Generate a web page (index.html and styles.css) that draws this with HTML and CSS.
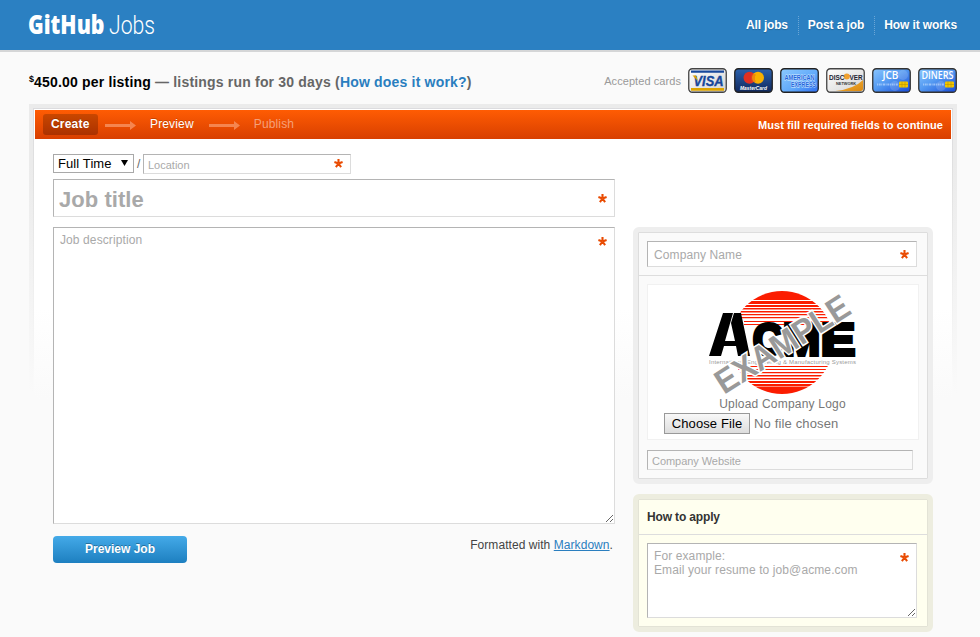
FILE: index.html
```html
<!DOCTYPE html>
<html lang="en">
<head>
<meta charset="utf-8">
<title>GitHub Jobs</title>
<link rel="stylesheet" href="styles.css">
</head>
<body>
<svg width="0" height="0" class="defs">
  <defs>
    <symbol id="star" viewBox="0 0 9 9"><path d="M4.5 4.5V.1M4.5 4.5L.4 3.1M4.5 4.5L8.600 3.1M4.5 4.5L1.900 8.200M4.5 4.5L7.100 8.200" stroke="#e94b02" stroke-width="2.1" fill="none"/></symbol>
    <symbol id="arrow" viewBox="0 0 31 9"><path d="M0 3h25V0l6 4.5-6 4.5V6H0z" fill="#f5854f"/></symbol>
    <linearGradient id="cardBlue" x1="0" y1="0" x2="1" y2="1"><stop offset="0" stop-color="#8ac6ff"/><stop offset=".45" stop-color="#559bf2"/><stop offset="1" stop-color="#1549d8"/></linearGradient>
    <linearGradient id="cardSky" x1="0" y1="0" x2="1" y2="1"><stop offset="0" stop-color="#8ccaff"/><stop offset=".6" stop-color="#5fa8fa"/><stop offset="1" stop-color="#2c6cf0"/></linearGradient>
    <linearGradient id="cardNavy" x1="0" y1="0" x2="0" y2="1"><stop offset="0" stop-color="#2b62ae"/><stop offset="1" stop-color="#10285c"/></linearGradient>
    <linearGradient id="cardGray" x1="0" y1="0" x2="1" y2="1"><stop offset="0" stop-color="#fff"/><stop offset="1" stop-color="#d2d2d2"/></linearGradient>
    <linearGradient id="gold" x1="0" y1="0" x2="1" y2="1"><stop offset="0" stop-color="#f4b43c"/><stop offset="1" stop-color="#dc8a12"/></linearGradient>
    <g id="chip"><rect x="27" y="13.500" width="9" height="6" rx="1" fill="#f2c500"/><path d="M30 13.500v6M33 13.500v6M27 16.500h9" stroke="#b89500" stroke-width=".6"/></g>
  </defs>
</svg>

<header class="header">
  <svg class="logo" width="130" height="36" viewBox="0 0 130 36">
    <text class="logo-bold" x="-1" y="27" textLength="76.500" lengthAdjust="spacingAndGlyphs">GitHub</text>
    <text class="logo-light" x="80" y="27" textLength="46" lengthAdjust="spacingAndGlyphs">Jobs</text>
  </svg>
  <nav class="nav"><a>All jobs</a><a>Post a job</a><a>How it works</a></nav>
</header>

<section class="pricing">
  <h2 class="price"><sup>$</sup><b>450.00 per listing</b> — listings run for 30 days (<a>How does it work?</a>)</h2>
  <div class="cards">
    <span>Accepted cards</span>
    <svg viewBox="0 0 39 25"><rect x=".75" y=".75" width="37.500" height="23.500" rx="3.500" fill="url(#cardGray)" stroke="#444" stroke-width="1.300"/><path d="M3 2.500h33v2.200H3z" fill="#17479b"/><path d="M3 20h33v2.800H3z" fill="#dda400"/><text x="5.500" y="18" class="visa" textLength="30" lengthAdjust="spacingAndGlyphs">VISA</text><path d="M4.500 7.500h3.500l2 5.500z" fill="#dda400"/></svg>
    <svg viewBox="0 0 39 25"><rect x=".75" y=".75" width="37.500" height="23.500" rx="3.500" fill="url(#cardNavy)" stroke="#222" stroke-width="1.300"/><circle cx="15.500" cy="9.800" r="6" fill="#e03022"/><circle cx="24" cy="9.800" r="6" fill="#f9b000"/><path d="M17.500 7h4M17 9h4M17 11h4M17.500 13h4" stroke="#e55719" stroke-width=".9"/><text x="6" y="21.500" class="mc" textLength="27" lengthAdjust="spacingAndGlyphs">MasterCard</text></svg>
    <svg viewBox="0 0 39 25"><rect x=".75" y=".75" width="37.500" height="23.500" rx="3.500" fill="url(#cardSky)" stroke="#222" stroke-width="1.300"/><text x="4.500" y="11.500" class="amex" textLength="30" lengthAdjust="spacingAndGlyphs">AMERICAN</text><text x="11" y="19" class="amex" textLength="25" lengthAdjust="spacingAndGlyphs">EXPRESS</text></svg>
    <svg viewBox="0 0 39 25"><rect x=".75" y=".75" width="37.500" height="23.500" rx="3.500" fill="url(#cardGray)" stroke="#444" stroke-width="1.300"/><path d="M9.500 23Q28 21 37 12v8.500q0 2.500-2.500 2.500z" fill="url(#gold)"/><circle cx="20.800" cy="8.500" r="3" fill="#f0a030"/><text x="3" y="11.500" class="disc" textLength="15.500" lengthAdjust="spacingAndGlyphs">DISC</text><text x="23.500" y="11.500" class="disc" textLength="13" lengthAdjust="spacingAndGlyphs">VER</text><text x="10" y="17.200" class="net" textLength="20" lengthAdjust="spacingAndGlyphs">NETWORK</text></svg>
    <svg viewBox="0 0 39 25"><rect x=".75" y=".75" width="37.500" height="23.500" rx="3.500" fill="url(#cardBlue)" stroke="#333" stroke-width="1.300"/><g fill="#fff" opacity=".15"><circle cx="31" cy="7" r="5"/><circle cx="23" cy="18" r="5"/></g><text x="10.500" y="11" class="jcb" textLength="16" lengthAdjust="spacingAndGlyphs">JCB</text><path d="M5 16.500h21" stroke="#b8d7ff" stroke-width="2" stroke-dasharray="1 .7 2 .6" opacity=".7"/><use href="#chip"/></svg>
    <svg viewBox="0 0 39 25"><rect x=".75" y=".75" width="37.500" height="23.500" rx="3.500" fill="url(#cardBlue)" stroke="#333" stroke-width="1.300"/><g fill="#fff" opacity=".15"><circle cx="31" cy="7" r="5"/><circle cx="23" cy="18" r="5"/></g><text x="3.500" y="11" class="jcb" textLength="32" lengthAdjust="spacingAndGlyphs">DINERS</text><path d="M5 16.500h21" stroke="#b8d7ff" stroke-width="2" stroke-dasharray="1 .7 2 .6" opacity=".7"/><use href="#chip"/></svg>
  </div>
</section>

<main class="frame">
 <div class="line">
 <div class="inner">
  <div class="steps">
    <span class="step current">Create</span>
    <svg class="arrow"><use href="#arrow"/></svg>
    <span class="step">Preview</span>
    <svg class="arrow"><use href="#arrow"/></svg>
    <span class="step off">Publish</span>
    <span class="notice">Must fill required fields to continue</span>
  </div>
  <div class="columns">
    <form class="main">
      <div class="row">
        <div class="select"><span>Full Time</span><svg width="7" height="6"><path d="M0 0h7L3.500 6z"/></svg></div>
        <span class="slash">/</span>
        <div class="field location"><input placeholder="Location"><svg class="star"><use href="#star"/></svg></div>
      </div>
      <div class="field title"><input placeholder="Job title"><svg class="star"><use href="#star"/></svg></div>
      <div class="field description"><textarea placeholder="Job description"></textarea><svg class="star"><use href="#star"/></svg></div>
      <div class="actions">
        <button type="button" class="submit">Preview Job</button>
        <p>Formatted with <a>Markdown</a>.</p>
      </div>
    </form>
    <aside class="side">
      <section class="box">
        <div class="box-head"><div class="field company"><input placeholder="Company Name"><svg class="star"><use href="#star"/></svg></div></div>
        <div class="box-body">
          <div class="upload">
            <svg class="acme" width="167" height="112" viewBox="0 0 167 112">
              <clipPath id="disc"><circle cx="82" cy="57.500" r="51.500"/></clipPath>
              <g clip-path="url(#disc)" fill="#fb1c00">
                <path d="M20 5h124v10H20zM20 16h124v3H20zM20 20h124v2H20zM20 23h124v1.500H20zM20 26h124v1.500H20zM20 29h124v1.200H20zM20 32h124v1.200H20zM44 36h100v1H44zM44 39h100v1H44z"/>
                <path d="M20 81h124v1H20zM20 84h124v1H20zM20 87h124v1.200H20zM20 90h124v1.400H20zM20 93h124v1.500H20zM20 96h124v2H20zM20 99h124v2.500H20zM20 102h124v8H20z"/>
              </g>
              <g class="acme-word">
                <path d="M23 28h10l-4 14-4 14h8v5h-9l-3 10H9z"/>
                <path d="M34 28h7l9 43H38l-2-10h-4v-5h3l-4-18z"/>
                <text x="53" y="70" font-size="45" textLength="30" lengthAdjust="spacingAndGlyphs">C</text>
                <text x="83" y="70" font-size="45" textLength="37" lengthAdjust="spacingAndGlyphs">M</text>
                <text x="121" y="70" font-size="45" textLength="34" lengthAdjust="spacingAndGlyphs">E</text>
              </g>
              <text class="acme-small" x="9" y="79" textLength="147" lengthAdjust="spacing">International Engineering &amp; Manufacturing Systems</text>
              <text class="example" x="-77" y="12" transform="translate(82.500 58.500) rotate(-32.500)" textLength="153" lengthAdjust="spacingAndGlyphs">EXAMPLE</text>
            </svg>
            <p>Upload Company Logo</p>
            <div class="file"><button type="button">Choose File</button><span>No file chosen</span></div>
          </div>
          <div class="field website"><input placeholder="Company Website"></div>
        </div>
      </section>
      <section class="box apply">
        <h3>How to apply</h3>
        <div class="field how"><textarea placeholder="For example:&#10;Email your resume to job@acme.com"></textarea><svg class="star"><use href="#star"/></svg></div>
      </section>
    </aside>
  </div>
 </div>
 </div>
</main>
</body>
</html>
```
FILE: styles.css
```css
* { box-sizing: border-box; }
body { margin: 0; height: 637px; overflow: hidden; background: #fafafa; color: #444; font: 12px/14px "Liberation Sans", Arial, sans-serif; }
p, h2, h3 { margin: 0; }
a { color: #2a7ebf; }
.defs { position: absolute; }

.header { display: flex; align-items: center; justify-content: space-between; height: 52px; padding: 0 23px 0 29px; background: #2b80c2; border-bottom: 2px solid #d5d6d7; }
.logo { display: block; fill: #fff; overflow: visible; }
.logo-bold { font: 800 26px "Open Sans", sans-serif; }
.logo-light { font: 300 26px Roboto, Lato, sans-serif; }
.nav { display: flex; line-height: 19px; font-weight: bold; letter-spacing: -.1px; }
.nav a { color: #fff; text-shadow: 0 1px 1px rgba(0, 0, 0, .2); }
.nav a + a { margin-left: 10px; padding-left: 9px; border-left: 1px dotted #6ba6d6; }
.nav a:first-child { letter-spacing: -.2px; }

.pricing { display: flex; justify-content: space-between; height: 52px; padding: 16px 23px 0 29px; }
.price { font-size: 14px; line-height: 28px; color: #666; letter-spacing: .185px; white-space: nowrap; }
.price b { color: #000; }
.price sup { font-size: 9px; line-height: 1px; color: #000; letter-spacing: 0; vertical-align: 5px; }
.cards { display: flex; gap: 7px; color: #999; font-size: 11px; line-height: 27px; letter-spacing: .07px; }
.cards svg { display: block; width: 39px; height: 25px; letter-spacing: 0; overflow: visible; }
.cards text { font-family: "Liberation Sans", sans-serif; font-weight: bold; }
.visa { font-size: 15px; font-style: italic; fill: #17479b; stroke: #17479b; stroke-width: .4px; }
.mc { font-size: 6px; font-style: italic; fill: #fff; }
.amex { font-size: 6.5px; fill: #1f66dc; stroke: #d5eaff; stroke-width: .8px; paint-order: stroke; }
.disc { font-size: 8px; fill: #223; }
.net { font-size: 4px; fill: #333; }
.cards .jcb { font: 600 10px "Open Sans", sans-serif; fill: #fff; }

.frame { margin: 0 23px 0 29px; padding: 4px 4px 0; height: 533px; background: linear-gradient(#ebebeb 0, #ebebeb 60px, #fafafa 290px); }
.line { padding: 1px 1px 0; height: 529px; background: linear-gradient(#dcdcdf 0, #e0e0e0 60px, #fafafa 270px); }
.inner { padding: 1px 1px 0; height: 528px; background: linear-gradient(#fff 0, #fff 200px, #fafafa 290px); }
.steps { display: flex; align-items: center; height: 29px; padding: 0 8px; background: linear-gradient(#ff5c03, #d83f00); }
.step { padding-bottom: 1px; color: #fff; text-shadow: 0 -1px 0 rgba(0, 0, 0, .2); letter-spacing: .15px; }
.step.current { width: 55px; padding: 3px 0 4px 8px; border-radius: 3px; background: linear-gradient(#c94700, #ab3100); font-weight: bold; letter-spacing: .2px; }
.step.off { color: #f5a07a; text-shadow: none; letter-spacing: .15px; }
.arrow { width: 31px; height: 9px; margin: 1px 14px 0 15px; }
.current + .arrow { margin-left: 7px; }
.notice { margin-left: auto; color: #fff; font-size: 11px; font-weight: bold; letter-spacing: .06px; }

.columns { display: flex; gap: 18px; padding: 15px 18px 0; }
.main { width: 562px; }
.row { display: flex; height: 20px; margin-bottom: 5px; }
.select { display: flex; align-items: center; justify-content: space-between; width: 81px; height: 19px; padding: 0 5px 0 4px; background: #fff; border: 1px solid #a9a9a9; color: #000; font-size: 13px; letter-spacing: .1px; }
.select svg { margin-bottom: 1px; }
.slash { width: 9px; padding: 3px 0 0 3px; color: #666; }
.field { position: relative; background: #fff; border: 1px solid; border-color: #b4b4b4 #dcdcdc #dcdcdc #b4b4b4; }
.field input, .field textarea { display: block; width: 100%; height: 100%; margin: 0; border: 0; outline: 0; background: none; font: 12px/14px "Liberation Sans", Arial, sans-serif; letter-spacing: .1px; }
::placeholder { color: #a9a9a9; opacity: 1; }
.star { position: absolute; width: 9px; height: 9px; right: 7px; top: 9px; }
.location { width: 208px; }
.location input { padding: 2px 4px 0; font-size: 11px; letter-spacing: 0; }
.location .star { top: 4px; }
.title { height: 38px; margin-bottom: 10px; }
.title input { padding: 3px 5px 0; font-size: 22px; font-weight: bold; letter-spacing: .05px; }
.title .star { top: 14px; }
.description { height: 297px; }
.description textarea { padding: 5px 6px; resize: both; }
.actions { display: flex; justify-content: space-between; padding: 12px 2px 0 0; }
.submit { width: 134px; height: 27px; padding: 0 0 2px; border: 0; border-radius: 4px; background: linear-gradient(#44aae8, #1d7fc0); color: #fff; font: bold 12px "Liberation Sans", Arial, sans-serif; text-shadow: 0 -1px 0 rgba(0, 0, 0, .3); }
.actions p { padding-top: 2px; letter-spacing: .06px; }
.actions a { text-decoration: underline; }

.side { width: 300px; padding-top: 73px; }
.box { position: relative; border: 5px solid #eee; border-radius: 6px; background: #fafafa; box-shadow: inset 0 0 0 1px #ddd; height: 257px; margin-bottom: 10px; padding: 1px; }
.box-head { height: 43px; padding: 8px 10px 8px 8px; border-bottom: 1px solid #ddd; }
.company { height: 26px; }
.company input { padding: 1px 6px 0; }
.company .star { top: 8px; }
.box-body { padding: 8px; }
.upload { display: flex; flex-direction: column; align-items: center; width: 272px; height: 156px; background: #fff; border: 1px solid #f1f1f1; color: #777; }
.acme { display: block; overflow: visible; }
.upload p { letter-spacing: .2px; margin-left: -1px; }
.file { display: flex; align-items: center; align-self: flex-start; gap: 4px; margin: 2px 0 0 16px; font-size: 13px; letter-spacing: .15px; }
.file button { width: 86px; height: 21px; padding: 0; border: 1px solid #999; border-radius: 0; background: linear-gradient(#f8f8f8, #ddd); color: #000; font: 13px "Liberation Sans", Arial, sans-serif; letter-spacing: .1px; }
.acme-word text { font-family: "Liberation Sans", sans-serif; font-weight: bold; stroke: #000; stroke-width: 4px; }
.acme-small { font: 6px "Liberation Sans", sans-serif; fill: #999; }
.example { font: bold 34px "Liberation Sans", sans-serif; fill: #999; stroke: #fff; stroke-width: 3px; paint-order: stroke; }
.website { width: 266px; height: 20px; margin-top: 10px; background: #fafafa; }
.website input { padding: 2px 4px 0; font-size: 11px; letter-spacing: -.05px; }
.apply { height: 138px; border-color: #ededdf; background: #ffffef; box-shadow: inset 0 0 0 1px #e3e3d6; }
.apply h3 { height: 35px; padding: 10px 8px 0; border-bottom: 1px solid #ddd; color: #333; font-size: 12px; line-height: 14px; letter-spacing: -.15px; }
.how { width: 270px; height: 75px; margin: 8px; }
.how textarea { padding: 5px 6px; resize: both; }
```
